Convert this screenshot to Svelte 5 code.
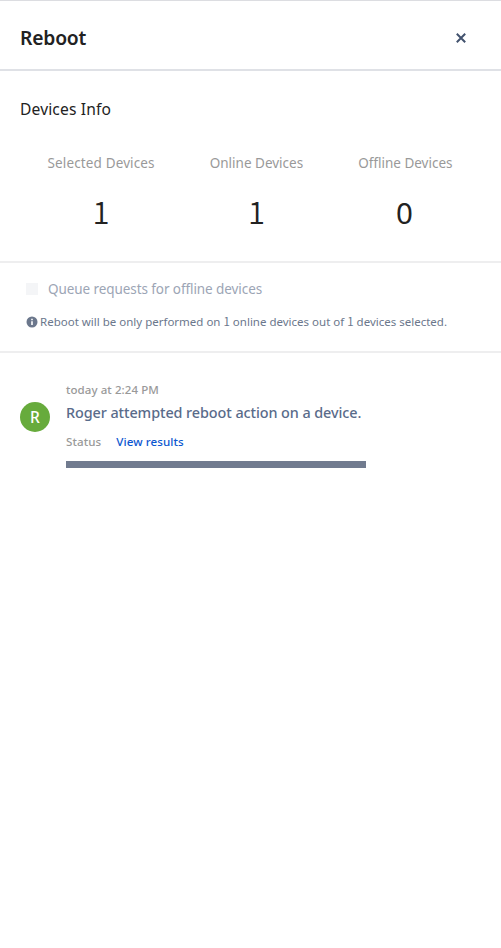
<script>
  const stats = [
    { label: 'Selected Devices', value: 1 },
    { label: 'Online Devices', value: 1 },
    { label: 'Offline Devices', value: 0 }
  ];
</script>

<div class="panel">
  <header>
    <h1>Reboot</h1>
    <button class="close" aria-label="Close">
      <svg width="10" height="10" viewBox="0 0 10 10"><path d="M.8.8 9.2 9.2M9.2.8.8 9.2" stroke="#42526e" stroke-width="2" fill="none" /></svg>
    </button>
  </header>

  <section class="info">
    <h2>Devices Info</h2>
    <div class="stats">
      {#each stats as stat}
        <div class="stat">
          <span class="label">{stat.label}</span>
          <span class="value" class:zero={stat.value === 0}>{stat.value}</span>
        </div>
      {/each}
    </div>
  </section>

  <section class="queue">
    <div class="option"><span class="box"></span><span>Queue requests for offline devices</span></div>
    <div class="note">
      <svg width="12" height="12" viewBox="0 0 12 12"><circle cx="6" cy="6" r="5.5" fill="#6b778c" /><path d="M5.2 2.8h1.6v1.5H5.2zM5.2 5.2h1.6v3.7H5.2z" fill="#fff" /></svg>
      <span>Reboot will be only performed on <i>1</i> online devices out of <i>1</i> devices selected.</span>
    </div>
  </section>

  <section class="activity">
    <div class="avatar">R</div>
    <div class="entry">
      <div class="time">today at 2:24 PM</div>
      <div class="message">Roger attempted reboot action on a device.</div>
      <div class="links"><span class="status">Status</span><span class="view">View results</span></div>
      <div class="bar"></div>
    </div>
  </section>
</div>

<style>
  :global(body) { background: #fff; }
  .panel {
    box-sizing: border-box;
    height: 948px;
    border-top: 1px solid #dcdde1;
    background: #fff;
    font-family: "Noto Sans", sans-serif;
    overflow: hidden;
  }
  header {
    box-sizing: border-box;
    height: 70px;
    display: flex;
    align-items: center;
    justify-content: space-between;
    padding: 5px 35px 0 20px;
    border-bottom: 2px solid #dfe1e6;
  }
  h1 { margin: 0; font-size: 19.3px; line-height: 28px; font-weight: 650; letter-spacing: -.2px; color: #222; }
  .close { display: flex; padding: 0; border: 0; background: none; }
  h2 { margin: 0; font-size: 15.6px; font-weight: 400; line-height: 24px; letter-spacing: .14px; color: #222; }
  .info {
    box-sizing: border-box;
    height: 192px;
    padding: 26px 21px 0 20px;
    border-bottom: 2px solid #eeeeef;
  }
  .stats { display: flex; justify-content: space-around; margin-top: 32px; }
  .stat { display: flex; flex-direction: column; align-items: center; }
  .label { font-size: 13.5px; line-height: 20px; letter-spacing: 0; color: #999; }
  .stat:first-child .label { letter-spacing: .14px; }
  .value { margin-top: 18px; font: 350 31px/40px "Noto Sans CJK JP", sans-serif; color: #222; }
  .value.zero { margin: 20px 2px 0 0; font: 400 29.5px/40px "Noto Sans", sans-serif; }
  .queue {
    box-sizing: border-box;
    height: 90px;
    padding: 16px 20px 0 26px;
    border-bottom: 2px solid #eeeeef;
  }
  .option { display: flex; align-items: center; gap: 10px; font-size: 13.5px; line-height: 20px; letter-spacing: -.08px; color: #9ca5b5; }
  .box { width: 12px; height: 12px; background: #f4f5f7; }
  .note { display: flex; align-items: center; gap: 2px; margin-top: 15px; font-size: 11.5px; line-height: 16px; color: #6b778c; white-space: nowrap; }
  .note i { font-family: "Noto Sans CJK JP", sans-serif; font-style: normal; line-height: 1; }
  .activity { display: flex; gap: 16px; padding: 29px 20px 0; }
  .avatar {
    width: 30px;
    height: 30px;
    margin-top: 20px;
    border-radius: 50%;
    background: #67ab3c;
    color: #fff;
    font-size: 15.5px;
    font-weight: 500;
    line-height: 30px;
    text-align: center;
  }
  .entry { font-weight: 500; }
  .time { font-size: 11.5px; line-height: 16px; letter-spacing: .08px; color: #999; }
  .message { margin-top: 5px; font-size: 14.4px; line-height: 20px; letter-spacing: -.08px; color: #596b8a; }
  .links { display: flex; gap: 15px; margin-top: 11px; font-size: 11.6px; line-height: 16px; letter-spacing: .08px; }
  .status { color: #999; }
  .view { color: #0c57d0; }
  .bar { width: 300px; height: 7px; margin-top: 11px; background: #717b8f; }
</style>
